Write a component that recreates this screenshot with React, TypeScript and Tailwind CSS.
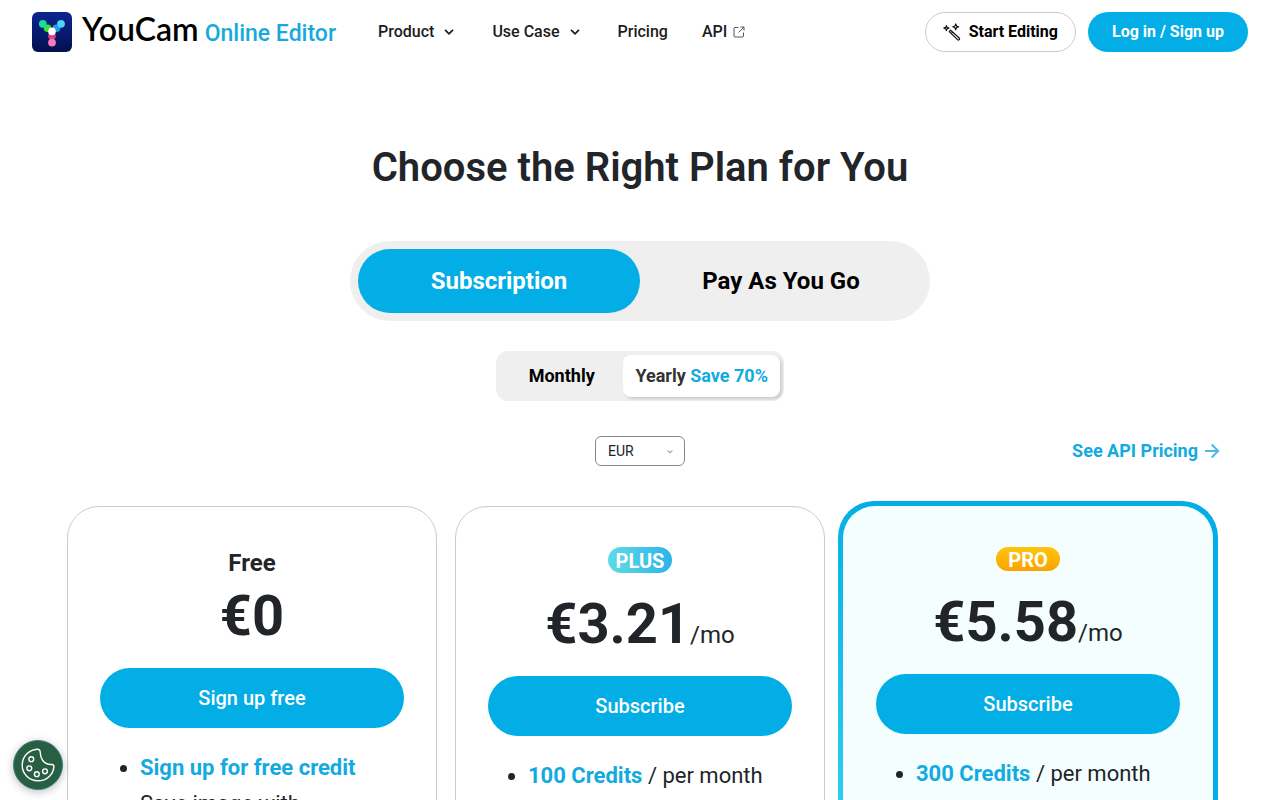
import { useState } from 'react'
import type { ReactNode } from 'react'
import clsx from 'clsx'

function AppLogo() {
  return (
    <svg viewBox="0 0 40 40" className="size-10" aria-hidden="true">
      <defs>
        <linearGradient id="logo-bg" x1="0" y1="0" x2="0" y2="1">
          <stop offset="0" stopColor="#0c2590" />
          <stop offset="1" stopColor="#03104f" />
        </linearGradient>
      </defs>
      <rect width="40" height="40" rx="6" fill="url(#logo-bg)" />
      <circle cx="15.6" cy="16.2" r="3.8" fill="#3ee02c" />
      <circle cx="24.4" cy="16.2" r="3.8" fill="#1f9fe8" />
      <circle cx="20" cy="24" r="3.8" fill="#e0437f" />
      <circle cx="10.8" cy="11.8" r="3.9" fill="#12e0a0" />
      <circle cx="29" cy="11.8" r="3.9" fill="#4cd3fb" />
      <circle cx="20" cy="30.6" r="3.9" fill="#fb76c0" />
      <circle cx="20" cy="19.4" r="3.8" fill="#fff" />
    </svg>
  )
}

function ChevronIcon({ className }: { className?: string }) {
  return (
    <svg viewBox="0 0 10 6" className={className} fill="none" stroke="currentColor" strokeWidth="1.7" aria-hidden="true">
      <path d="M1 0.8 5 4.8 9 0.8" />
    </svg>
  )
}

function ExternalIcon() {
  return (
    <svg viewBox="0 0 12 12" className="size-3" fill="none" stroke="#555" strokeWidth="1" aria-hidden="true">
      <path d="M5.5 1.5H2A1 1 0 0 0 1 2.5V10a1 1 0 0 0 1 1h7.5a1 1 0 0 0 1-1V6.5M7.5 1H11v3.5M11 1 5.5 6.5" />
    </svg>
  )
}

function WandIcon() {
  return (
    <svg viewBox="0 0 18 18" className="size-[18px]" fill="none" stroke="#111" strokeWidth="1.2" strokeLinejoin="round" aria-hidden="true">
      <path d="M6.2 8.6 7.6 7.2 16.2 15a1.1 1.1 0 0 1-1.7 1.7ZM8.2 10.6 9.7 9.1" />
      <path d="M12.7 0.9 13.5 3 15.6 3.8 13.5 4.6 12.7 6.7 11.9 4.6 9.8 3.8 11.9 3Z" />
      <path d="M3.4 2.6 4.1 4.400 5.900 5.100 4.100 5.800 3.400 7.600 2.700 5.800 0.900 5.100 2.700 4.400Z" />
    </svg>
  )
}

function ArrowIcon() {
  return (
    <svg viewBox="0 0 16 16" className="size-4" fill="none" stroke="#4db9e4" strokeWidth="2" aria-hidden="true">
      <path d="M1 8h13M7.7 1.5 14.2 8l-6.5 6.5" />
    </svg>
  )
}

function CookieIcon() {
  return (
    <svg viewBox="0 0 34 34" className="size-[34px]" fill="none" stroke="#fff" strokeWidth="1.4" strokeLinejoin="round" aria-hidden="true">
      <path d="M16.3 1.2C8 1.6 1.2 8.400 1.2 17.200 1.200 25.800 8.200 32.800 17 32.800c8.600 0 15.400-6.300 15.900-14.200.1-1.500-.6-2.200-2.200-2.100-3.500.2-6.500-1-8.800-3.800-1.900-2.300-2.600-4.800-2.700-8.400 0-2.100-1-3.200-2.900-3.100Z" />
      <circle cx="10.3" cy="11.200" r="2.400" />
      <circle cx="8.300" cy="20.300" r="2.400" />
      <circle cx="15.800" cy="26.200" r="2.400" />
      <circle cx="24" cy="23.300" r="2.400" />
    </svg>
  )
}

function Header() {
  return (
    <header className="flex h-16 items-center justify-between px-8">
      <div className="flex items-center">
        <a href="/" className="flex items-center">
          <AppLogo />
          <span className="ml-2.5 flex items-baseline gap-1.5 pb-1">
            <span className="font-['Lato'] text-[32px] leading-10 font-semibold text-black">YouCam</span>
            <span className="text-[23px] font-medium text-[#18a9dc]">Online Editor</span>
          </span>
        </a>
        <nav className="ml-[42px] flex items-center gap-[34px] font-medium text-[#1c1c1c]">
          <button type="button" className="flex items-center gap-2.5">
            Product
            <ChevronIcon className="mr-1 w-2.5" />
          </button>
          <button type="button" className="flex items-center gap-2.5">
            Use Case
            <ChevronIcon className="mr-1 w-2.5" />
          </button>
          <a href="/pricing">Pricing</a>
          <a href="/api" className="flex items-center gap-1.5">
            API
            <ExternalIcon />
          </a>
        </nav>
      </div>
      <div className="flex gap-3">
        <button type="button" className="flex h-10 items-center gap-2 rounded-full border border-[#ccc] px-[17px] font-bold text-black">
          <WandIcon />
          Start Editing
        </button>
        <button type="button" className="h-10 rounded-full bg-[#03ade5] px-6 font-bold text-white">
          Log in / Sign up
        </button>
      </div>
    </header>
  )
}

type PlanProps = {
  badge: ReactNode
  price: string
  unit?: string
  action: string
  children: ReactNode
}

function PlanBody({ badge, price, unit, action, children }: PlanProps) {
  return (
    <div className="flex flex-col items-center">
      {badge}
      <div className="h-[89px] pt-[5px]">
        <p className="text-[24px] leading-[64px]">
          <span className="text-[56px] font-bold">{price}</span>
          {unit}
        </p>
      </div>
      <button type="button" className="h-[60px] w-full rounded-full bg-[#03ade5] text-[20px] font-medium text-white">
        {action}
      </button>
      <ul className="mt-[22px] w-full list-disc pl-10 text-[22px] leading-9">{children}</ul>
    </div>
  )
}

function App() {
  const [plan, setPlan] = useState('subscription')
  const [cycle, setCycle] = useState('yearly')

  return (
    <div className="h-screen overflow-y-auto bg-white font-['Roboto',sans-serif] text-[#212529] [scrollbar-width:none]">
      <Header />
      <main>
        <h1 className="mt-20 text-center text-[40px] leading-12 font-semibold">Choose the Right Plan for You</h1>

        <div className="mx-auto mt-[49px] grid h-20 max-w-[580px] grid-cols-2 rounded-full bg-[#efefef] p-2 text-[24px] font-bold">
          <button
            type="button"
            onClick={() => setPlan('subscription')}
            className={clsx('rounded-full', plan === 'subscription' ? 'bg-[#03ade5] text-white' : 'text-black')}
          >
            Subscription
          </button>
          <button
            type="button"
            onClick={() => setPlan('payg')}
            className={clsx('rounded-full', plan === 'payg' ? 'bg-[#03ade5] text-white' : 'text-black')}
          >
            Pay As You Go
          </button>
        </div>

        <div className="mx-auto mt-[30px] flex h-[50px] w-[288px] rounded-xl bg-[#efefef] p-1 text-[18px] leading-6 font-bold">
          <button
            type="button"
            onClick={() => setCycle('monthly')}
            className={clsx('flex-1 rounded-lg text-black', cycle === 'monthly' && 'bg-white shadow-[2px_2px_3px_rgba(0,0,0,0.15)]')}
          >
            Monthly
          </button>
          <button
            type="button"
            onClick={() => setCycle('yearly')}
            className={clsx('rounded-lg px-3 text-[#333]', cycle === 'yearly' && 'bg-white shadow-[2px_2px_3px_rgba(0,0,0,0.15)]')}
          >
            Yearly <span className="text-[#12aadf]">Save 70%</span>
          </button>
        </div>

        <div className="mt-[35px] grid grid-cols-[1fr_auto_1fr] items-center px-15">
          <div className="relative col-start-2">
            <select
              aria-label="Currency"
              className="block h-[30px] w-[90px] appearance-none rounded-md border border-[#888] bg-white px-3 text-sm"
              defaultValue="EUR"
            >
              <option>EUR</option>
              <option>USD</option>
            </select>
            <ChevronIcon className="pointer-events-none absolute top-3.5 right-3 w-1.5 text-[#999]" />
          </div>
          <a href="/api-pricing" className="flex items-center gap-1.5 justify-self-end text-[18px] leading-6 font-bold text-[#12aadf]">
            See API Pricing
            <ArrowIcon />
          </a>
        </div>

        <div className="mx-auto mt-10 grid max-w-[1280px] grid-cols-3 gap-[18px] px-[67px]">
          <section className="rounded-t-[32px] border border-[#ccc] px-8 pt-10 pb-12">
            <PlanBody
              badge={<h2 className="text-[24px] leading-8 font-bold">Free</h2>}
              price="€0"
              action="Sign up free"
            >
              <li className="font-bold text-[#12aadf] marker:text-[#212529]">Sign up for free credit</li>
              <li className="list-none">
                Save image with
                <br />
                watermark
              </li>
            </PlanBody>
          </section>

          <section className="rounded-t-[32px] border border-[#ccc] px-8 pt-10 pb-12">
            <PlanBody
              badge={
                <h2 className="mb-3.5 h-[26px] rounded-full bg-linear-to-r from-[#5fdbe6] to-[#2bb3e8] px-2 text-[20px] leading-7 font-bold text-white">
                  PLUS
                </h2>
              }
              price="€3.21"
              unit="/mo"
              action="Subscribe"
            >
              <li>
                <b className="text-[#12aadf]">100 Credits</b> / per month
              </li>
            </PlanBody>
          </section>

          {/* gradient frame grows out of the column by its own thickness */}
          <section className="-m-[5px] rounded-t-[36px] bg-linear-[45deg,#33d0ee_10%,#03ade5_55%] p-[5px]">
            <div className="h-full rounded-t-[32px] bg-[#f5feff] px-[33px] pt-[41px] pb-12">
              <PlanBody
                badge={
                  <h2 className="mb-3.5 h-6 rounded-full bg-linear-to-b from-[#fdc50c] to-[#fba303] px-3 text-[20px] leading-[26px] font-bold text-white">
                    PRO
                  </h2>
                }
                price="€5.58"
                unit="/mo"
                action="Subscribe"
              >
                <li>
                  <b className="text-[#12aadf]">300 Credits</b> / per month
                </li>
              </PlanBody>
            </div>
          </section>
        </div>
      </main>

      <button
        type="button"
        aria-label="Cookie preferences"
        className="fixed bottom-2.5 left-[13px] flex size-[50px] items-center justify-center rounded-full border border-[#3f7f86] bg-[#285f42] shadow-[0_2px_8px_rgba(0,0,0,0.25)]"
      >
        <CookieIcon />
      </button>
    </div>
  )
}

export default App
